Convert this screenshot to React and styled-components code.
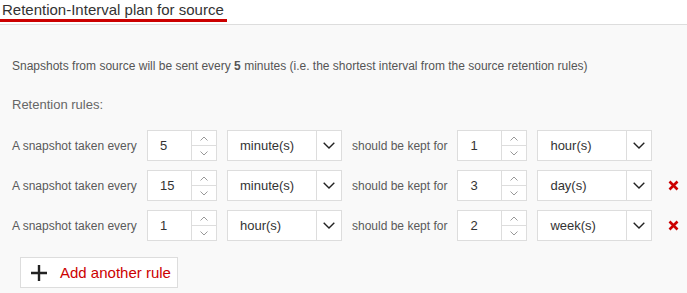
import React from 'react'
import styled, { createGlobalStyle } from 'styled-components'

const Global = createGlobalStyle`
  body {
    margin: 0;
    background: #f9f9f9;
    font-family: Arial, "Liberation Sans", sans-serif;
  }
`;

const Page = styled.div`
  width: 687px;
  height: 293px;
  background: #f9f9f9;
  overflow: hidden;
`;

const Header = styled.header`
  background: #fff;
  border-bottom: 1px solid #ddd;
  padding-bottom: 2px;
  display: flex;
`;

const Title = styled.h2`
  margin: 0;
  padding: 0 3px 0 2px;
  font-size: 15px;
  font-weight: normal;
  line-height: 19px;
  color: #333;
  border-bottom: 3px solid #c00;
`;

const Body = styled.div`
  padding: 33px 12px 0;
`;

const Info = styled.p`
  margin: 0;
  font-size: 12px;
  line-height: 16px;
  color: #555;
`;

const Heading = styled.h3`
  margin: 23px 0 0;
  font-size: 13px;
  font-weight: normal;
  line-height: 16px;
  color: #666;
`;

const Rules = styled.div`
  margin-top: 17px;
  display: flex;
  flex-direction: column;
  gap: 9px;
`;

const Row = styled.div`
  display: flex;
  align-items: center;
  gap: 10px;
  height: 31px;
`;

const Label = styled.span`
  flex: 0 0 ${p => p.$w}px;
  font-size: 12px;
  color: #5a5a5a;
  white-space: nowrap;
`;

const Spinner = styled.div`
  flex: 0 0 70px;
  height: 31px;
  box-sizing: border-box;
  border: 1px solid #ddd;
  background: #fff;
  display: flex;
`;

const Value = styled.span`
  flex: 1;
  display: flex;
  align-items: center;
  padding-left: 12px;
  font-size: 13px;
  color: #333;
`;

const Arrows = styled.div`
  width: 24px;
  border-left: 1px solid #ddd;
  display: flex;
  flex-direction: column;
`;

const ArrowBtn = styled.div`
  flex: 1;
  display: flex;
  align-items: center;
  justify-content: center;
  & + & {
    border-top: 1px solid #ddd;
  }
`;

const Select = styled.div`
  flex: 0 0 115px;
  height: 31px;
  box-sizing: border-box;
  border: 1px solid #ddd;
  background: #fff;
  display: flex;
`;

const Chevron = styled.div`
  width: 24px;
  border-left: 1px solid #ddd;
  display: flex;
  align-items: center;
  justify-content: center;
`;

const Remove = styled.button`
  flex: 0 0 22px;
  padding: 0;
  border: none;
  background: none;
  display: flex;
  justify-content: center;
  cursor: pointer;
`;

const AddButton = styled.button`
  margin: 16px 0 0 8px;
  height: 31px;
  width: 158px;
  box-sizing: border-box;
  border: 1px solid #ddd;
  background: #fff;
  display: flex;
  align-items: center;
  gap: 12px;
  padding: 0 0 0 9px;
  font-family: inherit;
  font-size: 15px;
  color: #c00;
  cursor: pointer;
`;

const Caret = ({ up }) => (
  <svg width="8" height="5" viewBox="0 0 8 5">
    <path d={up ? 'M0.5 4.5 L4 1 L7.5 4.5' : 'M0.5 0.5 L4 4 L7.5 0.5'} fill="none" stroke="#999" strokeWidth="1" />
  </svg>
);

const NumberBox = ({ value }) => (
  <Spinner>
    <Value>{value}</Value>
    <Arrows>
      <ArrowBtn><Caret up /></ArrowBtn>
      <ArrowBtn><Caret /></ArrowBtn>
    </Arrows>
  </Spinner>
);

const Dropdown = ({ value }) => (
  <Select>
    <Value>{value}</Value>
    <Chevron>
      <svg width="12" height="7" viewBox="0 0 12 7">
        <path d="M0.7 0.7 L6 6 L11.3 0.7" fill="none" stroke="#222" strokeWidth="1.4" />
      </svg>
    </Chevron>
  </Select>
);

const rules = [
  { every: 5, unit: 'minute(s)', keep: 1, keepUnit: 'hour(s)', removable: false },
  { every: 15, unit: 'minute(s)', keep: 3, keepUnit: 'day(s)', removable: true },
  { every: 1, unit: 'hour(s)', keep: 2, keepUnit: 'week(s)', removable: true },
];

export default function App() {
  return (
    <Page>
      <Global />
      <Header>
        <Title>Retention-Interval plan for source</Title>
      </Header>
      <Body>
        <Info>
          Snapshots from source will be sent every <b>5</b> minutes (i.e. the shortest interval from the source retention rules)
        </Info>
        <Heading>Retention rules:</Heading>
        <Rules>
          {rules.map((r, i) => (
            <Row key={i}>
              <Label $w={125}>A snapshot taken every</Label>
              <NumberBox value={r.every} />
              <Dropdown value={r.unit} />
              <Label $w={95}>should be kept for</Label>
              <NumberBox value={r.keep} />
              <Dropdown value={r.keepUnit} />
              {r.removable && (
                <Remove>
                  <svg width="11" height="11" viewBox="0 0 11 11">
                    <path d="M1.5 1.5 L9.5 9.5 M9.5 1.5 L1.5 9.5" stroke="#c00" strokeWidth="2.6" />
                  </svg>
                </Remove>
              )}
            </Row>
          ))}
        </Rules>
        <AddButton>
          <svg width="18" height="18" viewBox="0 0 18 18">
            <path d="M9 1 V17 M1 9 H17" stroke="#222" strokeWidth="2.4" />
          </svg>
          Add another rule
        </AddButton>
      </Body>
    </Page>
  )
}
